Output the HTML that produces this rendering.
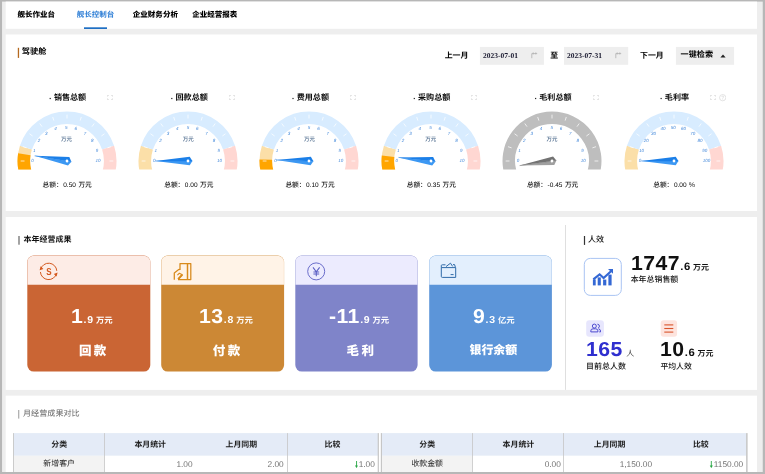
<!DOCTYPE html>
<html lang="zh"><head><meta charset="utf-8"><title>驾驶舱</title>
<style>
html,body{margin:0;padding:0;background:#b7b7b7}
body{width:765px;height:474px;overflow:hidden;position:relative;font-family:"Liberation Sans",sans-serif;will-change:transform;text-rendering:geometricPrecision}
.a{position:absolute;display:block}
span.a{white-space:nowrap}
.ls{font-family:"Liberation Sans",sans-serif}
.lf{font-family:"Liberation Serif",serif}
.cj{font-family:"Liberation Sans","Noto Sans CJK SC",sans-serif}
</style></head><body>
<svg class="a" style="left:0;top:0" width="765" height="474" viewBox="0 0 765 474"><rect x="0.00" y="0.00" width="765.00" height="474.00" fill="#b7b7b7"/><rect x="2.05" y="1.60" width="760.70" height="470.40" fill="#eeeeee"/><rect x="5.70" y="1.60" width="751.35" height="27.20" fill="#fff"/><rect x="5.70" y="34.50" width="751.35" height="176.50" fill="#fff"/><rect x="5.70" y="217.05" width="751.35" height="172.85" fill="#fff"/><rect x="5.70" y="395.65" width="751.35" height="76.35" fill="#fff"/><rect x="84.00" y="27.30" width="23.00" height="1.70" fill="#1f6fc4"/><rect x="17.80" y="47.80" width="1.30" height="10.10" fill="#b5691f"/><rect x="479.90" y="46.90" width="64.00" height="17.90" fill="#eeeeee"/><rect x="564.00" y="46.90" width="64.20" height="17.90" fill="#eeeeee"/><rect x="675.90" y="46.90" width="58.20" height="17.90" fill="#eeeeee"/><rect x="49.61" y="97.90" width="1.20" height="1.20" fill="#222"/><rect x="171.21" y="97.90" width="1.20" height="1.20" fill="#222"/><rect x="292.41" y="97.90" width="1.20" height="1.20" fill="#222"/><rect x="413.71" y="97.90" width="1.20" height="1.20" fill="#222"/><rect x="535.01" y="97.90" width="1.20" height="1.20" fill="#222"/><rect x="660.54" y="97.90" width="1.21" height="1.20" fill="#222"/><rect x="18.10" y="236.00" width="1.80" height="8.70" fill="#9a9a9a"/><rect x="27.3" y="255.5" width="123.00" height="116.10" rx="6.5" fill="#ca6534"/><path d="M27.45 284.7V262.00a6.35 6.35 0 0 1 6.35 -6.35H143.80a6.35 6.35 0 0 1 6.35 6.35V284.7z" fill="#fdece6"/><rect x="161.2" y="255.5" width="122.90" height="116.10" rx="6.5" fill="#cc8835"/><path d="M161.35 284.7V262.00a6.35 6.35 0 0 1 6.35 -6.35H277.60a6.35 6.35 0 0 1 6.35 6.35V284.7z" fill="#fff3e7"/><rect x="295.3" y="255.5" width="122.30" height="116.10" rx="6.5" fill="#7f84c9"/><path d="M295.45 284.7V262.00a6.35 6.35 0 0 1 6.35 -6.35H411.10a6.35 6.35 0 0 1 6.35 6.35V284.7z" fill="#ecebfe"/><rect x="429.2" y="255.5" width="122.70" height="116.10" rx="6.5" fill="#5c95d9"/><path d="M429.35 284.7V262.00a6.35 6.35 0 0 1 6.35 -6.35H545.40a6.35 6.35 0 0 1 6.35 6.35V284.7z" fill="#e3effd"/><rect x="565.10" y="225.00" width="0.70" height="164.90" fill="#d2d2d2"/><rect x="583.90" y="236.00" width="1.20" height="8.90" fill="#333"/><rect x="584.3" y="258.4" width="37" height="37" rx="6" fill="#fff" stroke="#a9c4f3" stroke-width="1"/><rect x="586.20" y="320.20" width="17.70" height="16.60" rx="3.0" fill="#e7e6fd"/><rect x="660.70" y="320.20" width="16.40" height="16.60" rx="3.0" fill="#fde4de"/><rect x="664.30" y="324.35" width="9.00" height="1.10" fill="#d9542b"/><rect x="664.30" y="327.95" width="9.00" height="1.10" fill="#d9542b"/><rect x="664.30" y="331.55" width="9.00" height="1.10" fill="#d9542b"/><rect x="18.10" y="410.00" width="1.20" height="8.60" fill="#aaa"/><rect x="13.60" y="433.10" width="364.40" height="22.70" fill="#e4ebf7"/><rect x="13.60" y="455.80" width="91.10" height="16.20" fill="#f3f3f3"/><rect x="104.70" y="455.80" width="273.30" height="16.20" fill="#fff"/><rect x="13.00" y="433.10" width="0.90" height="38.90" fill="#c6c6c6"/><rect x="104.00" y="433.10" width="0.80" height="38.90" fill="#c6c6c6"/><rect x="287.10" y="433.10" width="0.80" height="38.90" fill="#c6c6c6"/><rect x="377.70" y="433.10" width="1.20" height="38.90" fill="#c6c6c6"/><rect x="381.60" y="433.10" width="364.80" height="22.70" fill="#e4ebf7"/><rect x="381.60" y="455.80" width="91.20" height="16.20" fill="#f3f3f3"/><rect x="472.80" y="455.80" width="273.60" height="16.20" fill="#fff"/><rect x="380.80" y="433.10" width="1.20" height="38.90" fill="#c6c6c6"/><rect x="472.00" y="433.10" width="0.80" height="38.90" fill="#c6c6c6"/><rect x="563.10" y="433.10" width="0.80" height="38.90" fill="#c6c6c6"/><rect x="746.10" y="433.10" width="1.50" height="38.90" fill="#c6c6c6"/><rect x="0.00" y="472.00" width="765.00" height="2.00" fill="#b7b7b7"/></svg>
<span class="a cj" style="left:17.50px;top:10.85px;font-size:7.5px;line-height:7.5px;color:#000;font-weight:900">舰长作业台</span>
<span class="a cj" style="left:76.70px;top:10.85px;font-size:7.5px;line-height:7.5px;color:#2f7fd6;font-weight:bold">舰长控制台</span>
<span class="a cj" style="left:132.70px;top:10.82px;font-size:7.55px;line-height:7.55px;color:#000;font-weight:900">企业财务分析</span>
<span class="a cj" style="left:192.20px;top:10.85px;font-size:7.5px;line-height:7.5px;color:#000;font-weight:900">企业经营报表</span>
<span class="a cj" style="left:21.80px;top:47.70px;font-size:8.2px;line-height:8.2px;color:#000;font-weight:bold">驾驶舱</span>
<span class="a cj" style="left:444.70px;top:51.55px;font-size:7.9px;line-height:7.9px;color:#000;font-weight:bold">上一月</span>
<span class="a lf" style="left:482.90px;top:51.92px;font-size:7.5px;line-height:7.5px;color:#1a1a30;font-weight:bold;">2023-07-01</span>
<span class="a lf" style="left:567.00px;top:51.92px;font-size:7.5px;line-height:7.5px;color:#1a1a30;font-weight:bold;">2023-07-31</span>
<span class="a cj" style="left:550.35px;top:51.55px;font-size:7.9px;line-height:7.9px;color:#000;font-weight:bold">至</span>
<span class="a cj" style="left:640.00px;top:51.55px;font-size:7.9px;line-height:7.9px;color:#000;font-weight:bold">下一月</span>
<span class="a cj" style="left:680.60px;top:51.45px;font-size:8.1px;line-height:8.1px;color:#000;font-weight:bold">一键检索</span>
<svg class="a" style="left:720px;top:53.5px" width="6" height="4" viewBox="0 0 6 4"><path d="M0.4 3.6L3 0.6L5.6 3.6z" fill="#222"/></svg>
<svg class="a" style="left:530.5px;top:51.5px" width="7" height="7" viewBox="0 0 7 7" fill="none" stroke="#b0b0b0" stroke-width="0.8"><path d="M0.8 6.2V1.6H6.2M2.2 0.4V2.4M4.8 0.4V2.4"/></svg>
<svg class="a" style="left:614.5px;top:51.5px" width="7" height="7" viewBox="0 0 7 7" fill="none" stroke="#b0b0b0" stroke-width="0.8"><path d="M0.8 6.2V1.6H6.2M2.2 0.4V2.4M4.8 0.4V2.4"/></svg>
<svg class="a" style="left:6.60px;top:106.15px" width="120" height="70" viewBox="6.60 106.15 120 70"><clipPath id="gc66"><rect x="6.60" y="106.15" width="120" height="63.55"/></clipPath><g clip-path="url(#gc66)"><path d="M25.07 173.06A43.2 43.2 0 0 1 25.51 147.80" stroke="#fbdfa8" stroke-width="12.600000000000001" fill="none"/><path d="M25.51 147.80A43.2 43.2 0 0 1 107.69 147.80" stroke="#d8ecff" stroke-width="12.600000000000001" fill="none"/><path d="M107.69 147.80A43.2 43.2 0 0 1 108.13 173.06" stroke="#ffd7d2" stroke-width="12.600000000000001" fill="none"/><path d="M25.07 173.06A43.2 43.2 0 0 1 23.93 154.39" stroke="#ffa500" stroke-width="12.600000000000001" fill="none"/></g><path d="M24.10 161.15L20.30 161.15" stroke="#fff" stroke-width="0.8" opacity="0.9"/><path d="M26.18 148.02L22.57 146.84" stroke="#fff" stroke-width="0.8" opacity="0.9"/><path d="M32.22 136.17L29.14 133.94" stroke="#fff" stroke-width="0.8" opacity="0.9"/><path d="M41.62 126.77L39.39 123.69" stroke="#fff" stroke-width="0.8" opacity="0.9"/><path d="M53.47 120.73L52.29 117.12" stroke="#fff" stroke-width="0.8" opacity="0.9"/><path d="M66.60 118.65L66.60 114.85" stroke="#fff" stroke-width="0.8" opacity="0.9"/><path d="M79.73 120.73L80.91 117.12" stroke="#fff" stroke-width="0.8" opacity="0.9"/><path d="M91.58 126.77L93.81 123.69" stroke="#fff" stroke-width="0.8" opacity="0.9"/><path d="M100.98 136.17L104.06 133.94" stroke="#fff" stroke-width="0.8" opacity="0.9"/><path d="M107.02 148.02L110.63 146.84" stroke="#fff" stroke-width="0.8" opacity="0.9"/><path d="M109.10 161.15L112.90 161.15" stroke="#fff" stroke-width="0.8" opacity="0.9"/><g transform="translate(66.60 161.15) rotate(-171.00)"><path d="M32.8 0L-1.7 4.3L-4.4 0z" fill="#1b7fe8"/><path d="M32.8 0L-1.7 -4.3L-4.4 0z" fill="#3c98f3"/><path d="M32.8 0L-4.4 0" stroke="#1b7fe8" stroke-width="0.5"/><circle r="1.4" fill="#fff"/></g></svg>
<span class="a ls" style="left:32.60px;top:158.96px;font-size:4.5px;line-height:4.5px;color:#4388da;font-weight:normal;transform:translateX(-50%);font-style:italic;">0</span>
<span class="a ls" style="left:34.23px;top:148.67px;font-size:4.5px;line-height:4.5px;color:#4388da;font-weight:normal;transform:translateX(-50%);font-style:italic;">1</span>
<span class="a ls" style="left:38.96px;top:139.39px;font-size:4.5px;line-height:4.5px;color:#4388da;font-weight:normal;transform:translateX(-50%);font-style:italic;">2</span>
<span class="a ls" style="left:46.33px;top:132.02px;font-size:4.5px;line-height:4.5px;color:#4388da;font-weight:normal;transform:translateX(-50%);font-style:italic;">3</span>
<span class="a ls" style="left:55.61px;top:127.29px;font-size:4.5px;line-height:4.5px;color:#4388da;font-weight:normal;transform:translateX(-50%);font-style:italic;">4</span>
<span class="a ls" style="left:66.30px;top:125.66px;font-size:4.5px;line-height:4.5px;color:#4388da;font-weight:normal;transform:translateX(-50%);font-style:italic;">5</span>
<span class="a ls" style="left:75.69px;top:127.29px;font-size:4.5px;line-height:4.5px;color:#4388da;font-weight:normal;transform:translateX(-50%);font-style:italic;">6</span>
<span class="a ls" style="left:84.97px;top:132.02px;font-size:4.5px;line-height:4.5px;color:#4388da;font-weight:normal;transform:translateX(-50%);font-style:italic;">7</span>
<span class="a ls" style="left:92.34px;top:139.39px;font-size:4.5px;line-height:4.5px;color:#4388da;font-weight:normal;transform:translateX(-50%);font-style:italic;">8</span>
<span class="a ls" style="left:97.07px;top:148.67px;font-size:4.5px;line-height:4.5px;color:#4388da;font-weight:normal;transform:translateX(-50%);font-style:italic;">9</span>
<span class="a ls" style="left:97.90px;top:158.96px;font-size:4.5px;line-height:4.5px;color:#4388da;font-weight:normal;transform:translateX(-50%);font-style:italic;">10</span>
<span class="a cj" style="left:61.10px;top:138.15px;font-size:5.5px;line-height:5.5px;color:#4d6a8c;font-weight:500">万元</span>
<span class="a cj" style="left:53.91px;top:94.27px;font-size:8.07px;line-height:8.07px;color:#0a0a0a;font-weight:bold">销售总额</span>
<div class="a ls" style="left:67.20px;top:181.20px;height:10px;line-height:10px;font-size:6.5px;color:#1c1c1c;white-space:nowrap;transform:translateX(-50%)"><span class="cj" style="font-size:6.7px;color:#111;font-weight:500">总额：</span><span style="margin-left:0.6px;color:#000">0.50</span><span class="cj" style="font-size:6.7px;color:#111;font-weight:500;margin-left:2.5px">万元</span></div>
<svg class="a" style="left:107.10px;top:95.20px" width="6" height="5" viewBox="0 0 6 5" fill="none" stroke="#d6d6d6" stroke-width="0.8"><path d="M0.4 1.6V0.4H1.8M4.2 0.4H5.6V1.6M5.6 3.4V4.6H4.2M1.8 4.6H0.4V3.4"/></svg>
<svg class="a" style="left:128.20px;top:106.15px" width="120" height="70" viewBox="128.20 106.15 120 70"><clipPath id="gc188"><rect x="128.20" y="106.15" width="120" height="63.55"/></clipPath><g clip-path="url(#gc188)"><path d="M146.67 173.06A43.2 43.2 0 0 1 147.11 147.80" stroke="#fbdfa8" stroke-width="12.600000000000001" fill="none"/><path d="M147.11 147.80A43.2 43.2 0 0 1 229.29 147.80" stroke="#d8ecff" stroke-width="12.600000000000001" fill="none"/><path d="M229.29 147.80A43.2 43.2 0 0 1 229.73 173.06" stroke="#ffd7d2" stroke-width="12.600000000000001" fill="none"/></g><path d="M145.70 161.15L141.90 161.15" stroke="#fff" stroke-width="0.8" opacity="0.9"/><path d="M147.78 148.02L144.17 146.84" stroke="#fff" stroke-width="0.8" opacity="0.9"/><path d="M153.82 136.17L150.74 133.94" stroke="#fff" stroke-width="0.8" opacity="0.9"/><path d="M163.22 126.77L160.99 123.69" stroke="#fff" stroke-width="0.8" opacity="0.9"/><path d="M175.07 120.73L173.89 117.12" stroke="#fff" stroke-width="0.8" opacity="0.9"/><path d="M188.20 118.65L188.20 114.85" stroke="#fff" stroke-width="0.8" opacity="0.9"/><path d="M201.33 120.73L202.51 117.12" stroke="#fff" stroke-width="0.8" opacity="0.9"/><path d="M213.18 126.77L215.41 123.69" stroke="#fff" stroke-width="0.8" opacity="0.9"/><path d="M222.58 136.17L225.66 133.94" stroke="#fff" stroke-width="0.8" opacity="0.9"/><path d="M228.62 148.02L232.23 146.84" stroke="#fff" stroke-width="0.8" opacity="0.9"/><path d="M230.70 161.15L234.50 161.15" stroke="#fff" stroke-width="0.8" opacity="0.9"/><g transform="translate(188.20 161.15) rotate(-180.00)"><path d="M32.8 0L-1.7 4.3L-4.4 0z" fill="#1b7fe8"/><path d="M32.8 0L-1.7 -4.3L-4.4 0z" fill="#3c98f3"/><path d="M32.8 0L-4.4 0" stroke="#1b7fe8" stroke-width="0.5"/><circle r="1.4" fill="#fff"/></g></svg>
<span class="a ls" style="left:154.20px;top:158.96px;font-size:4.5px;line-height:4.5px;color:#4388da;font-weight:normal;transform:translateX(-50%);font-style:italic;">0</span>
<span class="a ls" style="left:155.83px;top:148.67px;font-size:4.5px;line-height:4.5px;color:#4388da;font-weight:normal;transform:translateX(-50%);font-style:italic;">1</span>
<span class="a ls" style="left:160.56px;top:139.39px;font-size:4.5px;line-height:4.5px;color:#4388da;font-weight:normal;transform:translateX(-50%);font-style:italic;">2</span>
<span class="a ls" style="left:167.93px;top:132.02px;font-size:4.5px;line-height:4.5px;color:#4388da;font-weight:normal;transform:translateX(-50%);font-style:italic;">3</span>
<span class="a ls" style="left:177.21px;top:127.29px;font-size:4.5px;line-height:4.5px;color:#4388da;font-weight:normal;transform:translateX(-50%);font-style:italic;">4</span>
<span class="a ls" style="left:187.90px;top:125.66px;font-size:4.5px;line-height:4.5px;color:#4388da;font-weight:normal;transform:translateX(-50%);font-style:italic;">5</span>
<span class="a ls" style="left:197.29px;top:127.29px;font-size:4.5px;line-height:4.5px;color:#4388da;font-weight:normal;transform:translateX(-50%);font-style:italic;">6</span>
<span class="a ls" style="left:206.57px;top:132.02px;font-size:4.5px;line-height:4.5px;color:#4388da;font-weight:normal;transform:translateX(-50%);font-style:italic;">7</span>
<span class="a ls" style="left:213.94px;top:139.39px;font-size:4.5px;line-height:4.5px;color:#4388da;font-weight:normal;transform:translateX(-50%);font-style:italic;">8</span>
<span class="a ls" style="left:218.67px;top:148.67px;font-size:4.5px;line-height:4.5px;color:#4388da;font-weight:normal;transform:translateX(-50%);font-style:italic;">9</span>
<span class="a ls" style="left:219.50px;top:158.96px;font-size:4.5px;line-height:4.5px;color:#4388da;font-weight:normal;transform:translateX(-50%);font-style:italic;">10</span>
<span class="a cj" style="left:182.70px;top:138.15px;font-size:5.5px;line-height:5.5px;color:#4d6a8c;font-weight:500">万元</span>
<span class="a cj" style="left:175.51px;top:94.27px;font-size:8.07px;line-height:8.07px;color:#0a0a0a;font-weight:bold">回款总额</span>
<div class="a ls" style="left:188.80px;top:181.20px;height:10px;line-height:10px;font-size:6.5px;color:#1c1c1c;white-space:nowrap;transform:translateX(-50%)"><span class="cj" style="font-size:6.7px;color:#111;font-weight:500">总额：</span><span style="margin-left:0.6px;color:#000">0.00</span><span class="cj" style="font-size:6.7px;color:#111;font-weight:500;margin-left:2.5px">万元</span></div>
<svg class="a" style="left:228.70px;top:95.20px" width="6" height="5" viewBox="0 0 6 5" fill="none" stroke="#d6d6d6" stroke-width="0.8"><path d="M0.4 1.6V0.4H1.8M4.2 0.4H5.6V1.6M5.6 3.4V4.6H4.2M1.8 4.6H0.4V3.4"/></svg>
<svg class="a" style="left:249.40px;top:106.15px" width="120" height="70" viewBox="249.40 106.15 120 70"><clipPath id="gc309"><rect x="249.40" y="106.15" width="120" height="63.55"/></clipPath><g clip-path="url(#gc309)"><path d="M267.87 173.06A43.2 43.2 0 0 1 268.31 147.80" stroke="#fbdfa8" stroke-width="12.600000000000001" fill="none"/><path d="M268.31 147.80A43.2 43.2 0 0 1 350.49 147.80" stroke="#d8ecff" stroke-width="12.600000000000001" fill="none"/><path d="M350.49 147.80A43.2 43.2 0 0 1 350.93 173.06" stroke="#ffd7d2" stroke-width="12.600000000000001" fill="none"/><path d="M267.87 173.06A43.2 43.2 0 0 1 266.22 159.79" stroke="#ffa500" stroke-width="12.600000000000001" fill="none"/></g><path d="M266.90 161.15L263.10 161.15" stroke="#fff" stroke-width="0.8" opacity="0.9"/><path d="M268.98 148.02L265.37 146.84" stroke="#fff" stroke-width="0.8" opacity="0.9"/><path d="M275.02 136.17L271.94 133.94" stroke="#fff" stroke-width="0.8" opacity="0.9"/><path d="M284.42 126.77L282.19 123.69" stroke="#fff" stroke-width="0.8" opacity="0.9"/><path d="M296.27 120.73L295.09 117.12" stroke="#fff" stroke-width="0.8" opacity="0.9"/><path d="M309.40 118.65L309.40 114.85" stroke="#fff" stroke-width="0.8" opacity="0.9"/><path d="M322.53 120.73L323.71 117.12" stroke="#fff" stroke-width="0.8" opacity="0.9"/><path d="M334.38 126.77L336.61 123.69" stroke="#fff" stroke-width="0.8" opacity="0.9"/><path d="M343.78 136.17L346.86 133.94" stroke="#fff" stroke-width="0.8" opacity="0.9"/><path d="M349.82 148.02L353.43 146.84" stroke="#fff" stroke-width="0.8" opacity="0.9"/><path d="M351.90 161.15L355.70 161.15" stroke="#fff" stroke-width="0.8" opacity="0.9"/><g transform="translate(309.40 161.15) rotate(-178.20)"><path d="M32.8 0L-1.7 4.3L-4.4 0z" fill="#1b7fe8"/><path d="M32.8 0L-1.7 -4.3L-4.4 0z" fill="#3c98f3"/><path d="M32.8 0L-4.4 0" stroke="#1b7fe8" stroke-width="0.5"/><circle r="1.4" fill="#fff"/></g></svg>
<span class="a ls" style="left:275.40px;top:158.96px;font-size:4.5px;line-height:4.5px;color:#4388da;font-weight:normal;transform:translateX(-50%);font-style:italic;">0</span>
<span class="a ls" style="left:277.03px;top:148.67px;font-size:4.5px;line-height:4.5px;color:#4388da;font-weight:normal;transform:translateX(-50%);font-style:italic;">1</span>
<span class="a ls" style="left:281.76px;top:139.39px;font-size:4.5px;line-height:4.5px;color:#4388da;font-weight:normal;transform:translateX(-50%);font-style:italic;">2</span>
<span class="a ls" style="left:289.13px;top:132.02px;font-size:4.5px;line-height:4.5px;color:#4388da;font-weight:normal;transform:translateX(-50%);font-style:italic;">3</span>
<span class="a ls" style="left:298.41px;top:127.29px;font-size:4.5px;line-height:4.5px;color:#4388da;font-weight:normal;transform:translateX(-50%);font-style:italic;">4</span>
<span class="a ls" style="left:309.10px;top:125.66px;font-size:4.5px;line-height:4.5px;color:#4388da;font-weight:normal;transform:translateX(-50%);font-style:italic;">5</span>
<span class="a ls" style="left:318.49px;top:127.29px;font-size:4.5px;line-height:4.5px;color:#4388da;font-weight:normal;transform:translateX(-50%);font-style:italic;">6</span>
<span class="a ls" style="left:327.77px;top:132.02px;font-size:4.5px;line-height:4.5px;color:#4388da;font-weight:normal;transform:translateX(-50%);font-style:italic;">7</span>
<span class="a ls" style="left:335.14px;top:139.39px;font-size:4.5px;line-height:4.5px;color:#4388da;font-weight:normal;transform:translateX(-50%);font-style:italic;">8</span>
<span class="a ls" style="left:339.87px;top:148.67px;font-size:4.5px;line-height:4.5px;color:#4388da;font-weight:normal;transform:translateX(-50%);font-style:italic;">9</span>
<span class="a ls" style="left:340.70px;top:158.96px;font-size:4.5px;line-height:4.5px;color:#4388da;font-weight:normal;transform:translateX(-50%);font-style:italic;">10</span>
<span class="a cj" style="left:303.90px;top:138.15px;font-size:5.5px;line-height:5.5px;color:#4d6a8c;font-weight:500">万元</span>
<span class="a cj" style="left:296.71px;top:94.27px;font-size:8.07px;line-height:8.07px;color:#0a0a0a;font-weight:bold">费用总额</span>
<div class="a ls" style="left:310.00px;top:181.20px;height:10px;line-height:10px;font-size:6.5px;color:#1c1c1c;white-space:nowrap;transform:translateX(-50%)"><span class="cj" style="font-size:6.7px;color:#111;font-weight:500">总额：</span><span style="margin-left:0.6px;color:#000">0.10</span><span class="cj" style="font-size:6.7px;color:#111;font-weight:500;margin-left:2.5px">万元</span></div>
<svg class="a" style="left:349.90px;top:95.20px" width="6" height="5" viewBox="0 0 6 5" fill="none" stroke="#d6d6d6" stroke-width="0.8"><path d="M0.4 1.6V0.4H1.8M4.2 0.4H5.6V1.6M5.6 3.4V4.6H4.2M1.8 4.6H0.4V3.4"/></svg>
<svg class="a" style="left:370.70px;top:106.15px" width="120" height="70" viewBox="370.70 106.15 120 70"><clipPath id="gc430"><rect x="370.70" y="106.15" width="120" height="63.55"/></clipPath><g clip-path="url(#gc430)"><path d="M389.17 173.06A43.2 43.2 0 0 1 389.61 147.80" stroke="#fbdfa8" stroke-width="12.600000000000001" fill="none"/><path d="M389.61 147.80A43.2 43.2 0 0 1 471.79 147.80" stroke="#d8ecff" stroke-width="12.600000000000001" fill="none"/><path d="M471.79 147.80A43.2 43.2 0 0 1 472.23 173.06" stroke="#ffd7d2" stroke-width="12.600000000000001" fill="none"/><path d="M389.17 173.06A43.2 43.2 0 0 1 387.76 156.41" stroke="#ffa500" stroke-width="12.600000000000001" fill="none"/></g><path d="M388.20 161.15L384.40 161.15" stroke="#fff" stroke-width="0.8" opacity="0.9"/><path d="M390.28 148.02L386.67 146.84" stroke="#fff" stroke-width="0.8" opacity="0.9"/><path d="M396.32 136.17L393.24 133.94" stroke="#fff" stroke-width="0.8" opacity="0.9"/><path d="M405.72 126.77L403.49 123.69" stroke="#fff" stroke-width="0.8" opacity="0.9"/><path d="M417.57 120.73L416.39 117.12" stroke="#fff" stroke-width="0.8" opacity="0.9"/><path d="M430.70 118.65L430.70 114.85" stroke="#fff" stroke-width="0.8" opacity="0.9"/><path d="M443.83 120.73L445.01 117.12" stroke="#fff" stroke-width="0.8" opacity="0.9"/><path d="M455.68 126.77L457.91 123.69" stroke="#fff" stroke-width="0.8" opacity="0.9"/><path d="M465.08 136.17L468.16 133.94" stroke="#fff" stroke-width="0.8" opacity="0.9"/><path d="M471.12 148.02L474.73 146.84" stroke="#fff" stroke-width="0.8" opacity="0.9"/><path d="M473.20 161.15L477.00 161.15" stroke="#fff" stroke-width="0.8" opacity="0.9"/><g transform="translate(430.70 161.15) rotate(-173.70)"><path d="M32.8 0L-1.7 4.3L-4.4 0z" fill="#1b7fe8"/><path d="M32.8 0L-1.7 -4.3L-4.4 0z" fill="#3c98f3"/><path d="M32.8 0L-4.4 0" stroke="#1b7fe8" stroke-width="0.5"/><circle r="1.4" fill="#fff"/></g></svg>
<span class="a ls" style="left:396.70px;top:158.96px;font-size:4.5px;line-height:4.5px;color:#4388da;font-weight:normal;transform:translateX(-50%);font-style:italic;">0</span>
<span class="a ls" style="left:398.33px;top:148.67px;font-size:4.5px;line-height:4.5px;color:#4388da;font-weight:normal;transform:translateX(-50%);font-style:italic;">1</span>
<span class="a ls" style="left:403.06px;top:139.39px;font-size:4.5px;line-height:4.5px;color:#4388da;font-weight:normal;transform:translateX(-50%);font-style:italic;">2</span>
<span class="a ls" style="left:410.43px;top:132.02px;font-size:4.5px;line-height:4.5px;color:#4388da;font-weight:normal;transform:translateX(-50%);font-style:italic;">3</span>
<span class="a ls" style="left:419.71px;top:127.29px;font-size:4.5px;line-height:4.5px;color:#4388da;font-weight:normal;transform:translateX(-50%);font-style:italic;">4</span>
<span class="a ls" style="left:430.40px;top:125.66px;font-size:4.5px;line-height:4.5px;color:#4388da;font-weight:normal;transform:translateX(-50%);font-style:italic;">5</span>
<span class="a ls" style="left:439.79px;top:127.29px;font-size:4.5px;line-height:4.5px;color:#4388da;font-weight:normal;transform:translateX(-50%);font-style:italic;">6</span>
<span class="a ls" style="left:449.07px;top:132.02px;font-size:4.5px;line-height:4.5px;color:#4388da;font-weight:normal;transform:translateX(-50%);font-style:italic;">7</span>
<span class="a ls" style="left:456.44px;top:139.39px;font-size:4.5px;line-height:4.5px;color:#4388da;font-weight:normal;transform:translateX(-50%);font-style:italic;">8</span>
<span class="a ls" style="left:461.17px;top:148.67px;font-size:4.5px;line-height:4.5px;color:#4388da;font-weight:normal;transform:translateX(-50%);font-style:italic;">9</span>
<span class="a ls" style="left:462.00px;top:158.96px;font-size:4.5px;line-height:4.5px;color:#4388da;font-weight:normal;transform:translateX(-50%);font-style:italic;">10</span>
<span class="a cj" style="left:425.20px;top:138.15px;font-size:5.5px;line-height:5.5px;color:#4d6a8c;font-weight:500">万元</span>
<span class="a cj" style="left:418.01px;top:94.27px;font-size:8.07px;line-height:8.07px;color:#0a0a0a;font-weight:bold">采购总额</span>
<div class="a ls" style="left:431.30px;top:181.20px;height:10px;line-height:10px;font-size:6.5px;color:#1c1c1c;white-space:nowrap;transform:translateX(-50%)"><span class="cj" style="font-size:6.7px;color:#111;font-weight:500">总额：</span><span style="margin-left:0.6px;color:#000">0.35</span><span class="cj" style="font-size:6.7px;color:#111;font-weight:500;margin-left:2.5px">万元</span></div>
<svg class="a" style="left:471.20px;top:95.20px" width="6" height="5" viewBox="0 0 6 5" fill="none" stroke="#d6d6d6" stroke-width="0.8"><path d="M0.4 1.6V0.4H1.8M4.2 0.4H5.6V1.6M5.6 3.4V4.6H4.2M1.8 4.6H0.4V3.4"/></svg>
<svg class="a" style="left:492.00px;top:106.15px" width="120" height="70" viewBox="492.00 106.15 120 70"><clipPath id="gc552"><rect x="492.00" y="106.15" width="120" height="63.55"/></clipPath><g clip-path="url(#gc552)"><path d="M510.47 173.06A43.2 43.2 0 1 1 593.53 173.06" stroke="#bebebe" stroke-width="12.600000000000001" fill="none"/></g><path d="M509.50 161.15L505.70 161.15" stroke="#fff" stroke-width="0.8" opacity="0.9"/><path d="M511.58 148.02L507.97 146.84" stroke="#fff" stroke-width="0.8" opacity="0.9"/><path d="M517.62 136.17L514.54 133.94" stroke="#fff" stroke-width="0.8" opacity="0.9"/><path d="M527.02 126.77L524.79 123.69" stroke="#fff" stroke-width="0.8" opacity="0.9"/><path d="M538.87 120.73L537.69 117.12" stroke="#fff" stroke-width="0.8" opacity="0.9"/><path d="M552.00 118.65L552.00 114.85" stroke="#fff" stroke-width="0.8" opacity="0.9"/><path d="M565.13 120.73L566.31 117.12" stroke="#fff" stroke-width="0.8" opacity="0.9"/><path d="M576.98 126.77L579.21 123.69" stroke="#fff" stroke-width="0.8" opacity="0.9"/><path d="M586.38 136.17L589.46 133.94" stroke="#fff" stroke-width="0.8" opacity="0.9"/><path d="M592.42 148.02L596.03 146.84" stroke="#fff" stroke-width="0.8" opacity="0.9"/><path d="M594.50 161.15L598.30 161.15" stroke="#fff" stroke-width="0.8" opacity="0.9"/><g transform="translate(552.00 161.15) rotate(-188.10)"><path d="M32.8 0L-1.7 4.3L-4.4 0z" fill="#727272"/><path d="M32.8 0L-1.7 -4.3L-4.4 0z" fill="#a0a0a0"/><path d="M32.8 0L-4.4 0" stroke="#727272" stroke-width="0.5"/><circle r="1.4" fill="#fff"/></g></svg>
<span class="a ls" style="left:518.00px;top:158.96px;font-size:4.5px;line-height:4.5px;color:#4388da;font-weight:normal;transform:translateX(-50%);font-style:italic;">0</span>
<span class="a ls" style="left:519.63px;top:148.67px;font-size:4.5px;line-height:4.5px;color:#4388da;font-weight:normal;transform:translateX(-50%);font-style:italic;">1</span>
<span class="a ls" style="left:524.36px;top:139.39px;font-size:4.5px;line-height:4.5px;color:#4388da;font-weight:normal;transform:translateX(-50%);font-style:italic;">2</span>
<span class="a ls" style="left:531.73px;top:132.02px;font-size:4.5px;line-height:4.5px;color:#4388da;font-weight:normal;transform:translateX(-50%);font-style:italic;">3</span>
<span class="a ls" style="left:541.01px;top:127.29px;font-size:4.5px;line-height:4.5px;color:#4388da;font-weight:normal;transform:translateX(-50%);font-style:italic;">4</span>
<span class="a ls" style="left:551.70px;top:125.66px;font-size:4.5px;line-height:4.5px;color:#4388da;font-weight:normal;transform:translateX(-50%);font-style:italic;">5</span>
<span class="a ls" style="left:561.09px;top:127.29px;font-size:4.5px;line-height:4.5px;color:#4388da;font-weight:normal;transform:translateX(-50%);font-style:italic;">6</span>
<span class="a ls" style="left:570.37px;top:132.02px;font-size:4.5px;line-height:4.5px;color:#4388da;font-weight:normal;transform:translateX(-50%);font-style:italic;">7</span>
<span class="a ls" style="left:577.74px;top:139.39px;font-size:4.5px;line-height:4.5px;color:#4388da;font-weight:normal;transform:translateX(-50%);font-style:italic;">8</span>
<span class="a ls" style="left:582.47px;top:148.67px;font-size:4.5px;line-height:4.5px;color:#4388da;font-weight:normal;transform:translateX(-50%);font-style:italic;">9</span>
<span class="a ls" style="left:583.30px;top:158.96px;font-size:4.5px;line-height:4.5px;color:#4388da;font-weight:normal;transform:translateX(-50%);font-style:italic;">10</span>
<span class="a cj" style="left:546.50px;top:138.15px;font-size:5.5px;line-height:5.5px;color:#4d6a8c;font-weight:500">万元</span>
<span class="a cj" style="left:539.31px;top:94.27px;font-size:8.07px;line-height:8.07px;color:#0a0a0a;font-weight:bold">毛利总额</span>
<div class="a ls" style="left:552.60px;top:181.20px;height:10px;line-height:10px;font-size:6.5px;color:#1c1c1c;white-space:nowrap;transform:translateX(-50%)"><span class="cj" style="font-size:6.7px;color:#111;font-weight:500">总额：</span><span style="margin-left:0.6px;color:#000">-0.45</span><span class="cj" style="font-size:6.7px;color:#111;font-weight:500;margin-left:2.5px">万元</span></div>
<svg class="a" style="left:592.50px;top:95.20px" width="6" height="5" viewBox="0 0 6 5" fill="none" stroke="#d6d6d6" stroke-width="0.8"><path d="M0.4 1.6V0.4H1.8M4.2 0.4H5.6V1.6M5.6 3.4V4.6H4.2M1.8 4.6H0.4V3.4"/></svg>
<svg class="a" style="left:613.50px;top:106.15px" width="120" height="70" viewBox="613.50 106.15 120 70"><clipPath id="gc673"><rect x="613.50" y="106.15" width="120" height="63.55"/></clipPath><g clip-path="url(#gc673)"><path d="M631.97 173.06A43.2 43.2 0 0 1 632.41 147.80" stroke="#fbdfa8" stroke-width="12.600000000000001" fill="none"/><path d="M632.41 147.80A43.2 43.2 0 0 1 714.59 147.80" stroke="#d8ecff" stroke-width="12.600000000000001" fill="none"/><path d="M714.59 147.80A43.2 43.2 0 0 1 715.03 173.06" stroke="#ffd7d2" stroke-width="12.600000000000001" fill="none"/></g><path d="M631.00 161.15L627.20 161.15" stroke="#fff" stroke-width="0.8" opacity="0.9"/><path d="M633.08 148.02L629.47 146.84" stroke="#fff" stroke-width="0.8" opacity="0.9"/><path d="M639.12 136.17L636.04 133.94" stroke="#fff" stroke-width="0.8" opacity="0.9"/><path d="M648.52 126.77L646.29 123.69" stroke="#fff" stroke-width="0.8" opacity="0.9"/><path d="M660.37 120.73L659.19 117.12" stroke="#fff" stroke-width="0.8" opacity="0.9"/><path d="M673.50 118.65L673.50 114.85" stroke="#fff" stroke-width="0.8" opacity="0.9"/><path d="M686.63 120.73L687.81 117.12" stroke="#fff" stroke-width="0.8" opacity="0.9"/><path d="M698.48 126.77L700.71 123.69" stroke="#fff" stroke-width="0.8" opacity="0.9"/><path d="M707.88 136.17L710.96 133.94" stroke="#fff" stroke-width="0.8" opacity="0.9"/><path d="M713.92 148.02L717.53 146.84" stroke="#fff" stroke-width="0.8" opacity="0.9"/><path d="M716.00 161.15L719.80 161.15" stroke="#fff" stroke-width="0.8" opacity="0.9"/><g transform="translate(673.50 161.15) rotate(-180.00)"><path d="M32.8 0L-1.7 4.3L-4.4 0z" fill="#1b7fe8"/><path d="M32.8 0L-1.7 -4.3L-4.4 0z" fill="#3c98f3"/><path d="M32.8 0L-4.4 0" stroke="#1b7fe8" stroke-width="0.5"/><circle r="1.4" fill="#fff"/></g></svg>
<span class="a ls" style="left:639.90px;top:158.96px;font-size:4.5px;line-height:4.5px;color:#4388da;font-weight:normal;transform:translateX(-50%);font-style:italic;">0</span>
<span class="a ls" style="left:641.53px;top:148.67px;font-size:4.5px;line-height:4.5px;color:#4388da;font-weight:normal;transform:translateX(-50%);font-style:italic;">10</span>
<span class="a ls" style="left:646.26px;top:139.39px;font-size:4.5px;line-height:4.5px;color:#4388da;font-weight:normal;transform:translateX(-50%);font-style:italic;">20</span>
<span class="a ls" style="left:653.63px;top:132.02px;font-size:4.5px;line-height:4.5px;color:#4388da;font-weight:normal;transform:translateX(-50%);font-style:italic;">30</span>
<span class="a ls" style="left:662.91px;top:127.29px;font-size:4.5px;line-height:4.5px;color:#4388da;font-weight:normal;transform:translateX(-50%);font-style:italic;">40</span>
<span class="a ls" style="left:673.20px;top:125.66px;font-size:4.5px;line-height:4.5px;color:#4388da;font-weight:normal;transform:translateX(-50%);font-style:italic;">50</span>
<span class="a ls" style="left:683.49px;top:127.29px;font-size:4.5px;line-height:4.5px;color:#4388da;font-weight:normal;transform:translateX(-50%);font-style:italic;">60</span>
<span class="a ls" style="left:692.77px;top:132.02px;font-size:4.5px;line-height:4.5px;color:#4388da;font-weight:normal;transform:translateX(-50%);font-style:italic;">70</span>
<span class="a ls" style="left:700.14px;top:139.39px;font-size:4.5px;line-height:4.5px;color:#4388da;font-weight:normal;transform:translateX(-50%);font-style:italic;">80</span>
<span class="a ls" style="left:704.87px;top:148.67px;font-size:4.5px;line-height:4.5px;color:#4388da;font-weight:normal;transform:translateX(-50%);font-style:italic;">90</span>
<span class="a ls" style="left:706.50px;top:158.96px;font-size:4.5px;line-height:4.5px;color:#4388da;font-weight:normal;transform:translateX(-50%);font-style:italic;">100</span>
<span class="a cj" style="left:664.84px;top:94.27px;font-size:8.07px;line-height:8.07px;color:#0a0a0a;font-weight:bold">毛利率</span>
<div class="a ls" style="left:674.10px;top:181.20px;height:10px;line-height:10px;font-size:6.5px;color:#1c1c1c;white-space:nowrap;transform:translateX(-50%)"><span class="cj" style="font-size:6.7px;color:#111;font-weight:500">总额：</span><span style="margin-left:0.6px;color:#000">0.00</span><span style="font-size:7px;margin-left:2.2px">%</span></div>
<svg class="a" style="left:710.00px;top:95.20px" width="6" height="5" viewBox="0 0 6 5" fill="none" stroke="#d6d6d6" stroke-width="0.8"><path d="M0.4 1.6V0.4H1.8M4.2 0.4H5.6V1.6M5.6 3.4V4.6H4.2M1.8 4.6H0.4V3.4"/></svg>
<svg class="a" style="left:718.9px;top:94.2px" width="7.4" height="7.4" viewBox="0 0 8 8" fill="none" stroke="#d9d9d9" stroke-width="0.8"><circle cx="4" cy="4" r="3.4"/><path d="M3 3.2Q3 2.2 4 2.2Q5 2.2 5 3.1Q5 3.8 4 4.3V4.9M4 5.7V6.2" stroke-width="0.8"/></svg>
<span class="a cj" style="left:23.50px;top:236.20px;font-size:8px;line-height:8px;color:#111;font-weight:bold">本年经营成果</span>
<div class="a ls" style="left:71.30px;top:304.9px;height:24px;line-height:24px;white-space:nowrap;color:#fff;font-weight:bold;transform-origin:0 0;transform:scaleX(1.05)"><span style="font-size:20.2px;letter-spacing:0.45px">1</span><span style="font-size:10px;letter-spacing:0.6px;margin-left:0.3px">.9</span><span style="display:inline-block;width:2.2px"></span><span class="cj" style="font-size:7.95px;color:#fff;font-weight:bold">万元</span></div>
<span class="a cj" style="left:78.90px;top:345.05px;font-size:12.5px;line-height:12.5px;letter-spacing:2.4px;color:#fff;font-weight:900">回款</span>
<div class="a ls" style="left:199.20px;top:304.9px;height:24px;line-height:24px;white-space:nowrap;color:#fff;font-weight:bold;transform-origin:0 0;transform:scaleX(1.05)"><span style="font-size:20.2px;letter-spacing:0.45px">13</span><span style="font-size:10px;letter-spacing:0.6px;margin-left:0.3px">.8</span><span style="display:inline-block;width:2.2px"></span><span class="cj" style="font-size:7.95px;color:#fff;font-weight:bold">万元</span></div>
<span class="a cj" style="left:212.75px;top:345.05px;font-size:12.5px;line-height:12.5px;letter-spacing:2.4px;color:#fff;font-weight:900">付款</span>
<div class="a ls" style="left:329.20px;top:304.9px;height:24px;line-height:24px;white-space:nowrap;color:#fff;font-weight:bold;transform-origin:0 0;transform:scaleX(1.05)"><span style="font-size:20.2px;letter-spacing:0.45px">-11</span><span style="font-size:10px;letter-spacing:0.6px;margin-left:0.3px">.9</span><span style="display:inline-block;width:2.2px"></span><span class="cj" style="font-size:7.95px;color:#fff;font-weight:bold">万元</span></div>
<span class="a cj" style="left:346.55px;top:345.05px;font-size:12.5px;line-height:12.5px;letter-spacing:2.4px;color:#fff;font-weight:900">毛利</span>
<div class="a ls" style="left:472.60px;top:304.9px;height:24px;line-height:24px;white-space:nowrap;color:#fff;font-weight:bold;transform-origin:0 0;transform:scaleX(1.05)"><span style="font-size:20.2px;letter-spacing:0.45px">9</span><span style="font-size:10px;letter-spacing:0.6px;margin-left:0.3px">.3</span><span style="display:inline-block;width:2.2px"></span><span class="cj" style="font-size:7.95px;color:#fff;font-weight:bold">亿元</span></div>
<span class="a cj" style="left:469.55px;top:345.35px;font-size:11.9px;line-height:11.9px;color:#fff;font-weight:900">银行余额</span>
<svg class="a" style="left:38px;top:261px" width="22" height="21" viewBox="38 261 22 21" fill="none" stroke="#d4591f" stroke-width="1"><path d="M40.64 269.42A8.2 8.2 0 0 1 56.78 270.83M56.56 273.38A8.2 8.2 0 0 1 40.42 271.97"/><path d="M39.6 270.3L40.6 266.3L43.4 268.9z M57.6 272.5L56.6 276.5L53.8 273.9z" fill="#d4591f" stroke="none"/></svg>
<span class="a ls" style="left:48.7px;top:267.9px;font-size:10px;line-height:10px;color:#d4591f;font-weight:bold;transform:translateX(-50%) scaleX(0.8)">S</span>
<svg class="a" style="left:172px;top:261px" width="22" height="21" viewBox="172 261 22 21" fill="none" stroke="#d88a1c" stroke-width="1.25" stroke-linejoin="round"><path d="M180 270V263.5H190.8V279.5H178"/><path d="M187.5 263.5V279.5" stroke-width="1.5"/><path d="M174.3 279.8V272.9L178.4 269.7L180 269.3"/><path d="M177.4 275.2L179.4 273.2L182.3 274.7L178.2 279.2" stroke-width="1.1"/><path d="M182.3 274.7L178.2 279.2" stroke-width="2"/></svg>
<svg class="a" style="left:305px;top:261px" width="22" height="21" viewBox="305 261 22 21" fill="none" stroke="#5b5fc4" stroke-width="0.9"><circle cx="316.2" cy="271.4" r="8.5"/><path d="M313 267.4L316.3 271.8L319.6 267.4M316.3 271.8V276.3M313.4 272H319.2M313.4 274H319.2" stroke-width="1.05"/></svg>
<svg class="a" style="left:439px;top:261px" width="20" height="19" viewBox="439 261 20 19" fill="none" stroke="#2f6aa8" stroke-width="1" stroke-linejoin="round"><path d="M441.3 267.6V276.4Q441.3 277.4 442.3 277.4H455.7V267.6z"/><path d="M441.3 267.6V265.6Q441.3 264.8 442.3 264.8H445.5M446 266.6L450.5 263.2L452.6 266.4M453 264.6L454.6 264.6L455.4 267.4"/><path d="M450.6 274.6H453.6"/></svg>
<span class="a cj" style="left:588.00px;top:236.40px;font-size:8px;line-height:8px;color:#111;font-weight:500">人效</span>
<svg class="a" style="left:590px;top:266px" width="26" height="22" viewBox="590 266 26 22" fill="#3468d4" stroke="none"><rect x="592.9" y="279.4" width="2.8" height="6"/><rect x="597.7" y="277.4" width="3.1" height="8"/><rect x="603.1" y="279.6" width="3.2" height="5.8"/><rect x="608.4" y="274.6" width="3.2" height="10.8"/><path d="M593.3 279.3L599.6 274.3L603.6 278.1L611 271.3" fill="none" stroke="#3468d4" stroke-width="2.15"/><path d="M608 269H613V273.8z"/></svg>
<div class="a ls" style="left:630.90px;top:252.30px;height:24px;line-height:24px;white-space:nowrap;color:#111;font-weight:bold;transform-origin:0 0;transform:scaleX(1.05)"><span style="font-size:20.2px;letter-spacing:0.45px">1747</span><span style="font-size:10.8px;letter-spacing:0.5px;margin-left:0.2px;color:#111">.6</span><span style="display:inline-block;width:2.2px"></span><span class="cj" style="font-size:7.6px;color:#111;font-weight:bold">万元</span></div>
<span class="a cj" style="left:630.70px;top:276.32px;font-size:7.95px;line-height:7.95px;color:#111;font-weight:500">本年总销售额</span>
<svg class="a" style="left:589.7px;top:323.4px" width="11.8" height="10" viewBox="0 0 13 11" fill="none" stroke="#4a48cf" stroke-width="1.1"><circle cx="4.8" cy="3.4" r="2.2"/><path d="M0.9 9.8V8.6Q0.9 6.4 3.4 6.4H6.2Q8.7 6.4 8.7 8.6V9.8z"/><path d="M8.2 1.3Q10.4 1.5 10.4 3.5Q10.4 5 8.9 5.6M9.4 6.5Q11.6 6.8 11.6 8.8V9.8H10.2"/></svg>
<div class="a ls" style="left:586.20px;top:337.50px;height:24px;line-height:24px;white-space:nowrap;color:#2f2fcf;font-weight:bold;transform-origin:0 0;transform:scaleX(1.05)"><span style="font-size:20.2px;letter-spacing:0.45px">165</span><span style="font-size:10.8px;letter-spacing:0.5px;margin-left:0.2px;color:#2f2fcf"></span><span style="display:inline-block;width:3.0px"></span><span class="cj" style="font-size:7.6px;color:#333;font-weight:normal">人</span></div>
<div class="a ls" style="left:660.20px;top:337.50px;height:24px;line-height:24px;white-space:nowrap;color:#111;font-weight:bold;transform-origin:0 0;transform:scaleX(1.05)"><span style="font-size:20.2px;letter-spacing:0.45px">10</span><span style="font-size:10.8px;letter-spacing:0.5px;margin-left:0.2px;color:#111">.6</span><span style="display:inline-block;width:2.2px"></span><span class="cj" style="font-size:7.6px;color:#111;font-weight:bold">万元</span></div>
<span class="a cj" style="left:585.90px;top:362.80px;font-size:8px;line-height:8px;color:#111;font-weight:500">目前总人数</span>
<span class="a cj" style="left:660.40px;top:362.88px;font-size:7.85px;line-height:7.85px;color:#111;font-weight:500">平均人效</span>
<span class="a cj" style="left:23.00px;top:410.25px;font-size:8.1px;line-height:8.1px;color:#666;font-weight:normal">月经营成果对比</span>
<span class="a cj" style="left:51.25px;top:440.55px;font-size:7.9px;line-height:7.9px;color:#1a1a1a;font-weight:bold">分类</span>
<span class="a cj" style="left:134.45px;top:440.55px;font-size:7.9px;line-height:7.9px;color:#1a1a1a;font-weight:bold">本月统计</span>
<span class="a cj" style="left:225.55px;top:440.55px;font-size:7.9px;line-height:7.9px;color:#1a1a1a;font-weight:bold">上月同期</span>
<span class="a cj" style="left:324.55px;top:440.55px;font-size:7.9px;line-height:7.9px;color:#1a1a1a;font-weight:bold">比较</span>
<span class="a cj" style="left:43.35px;top:460.45px;font-size:7.9px;line-height:7.9px;color:#222;font-weight:normal">新增客户</span>
<span class="a ls" style="left:192.60px;top:460.07px;font-size:8.3px;line-height:8.3px;color:#747474;font-weight:normal;transform:translateX(-100%);">1.00</span>
<span class="a ls" style="left:283.70px;top:460.07px;font-size:8.3px;line-height:8.3px;color:#747474;font-weight:normal;transform:translateX(-100%);">2.00</span>
<span class="a ls" style="left:374.80px;top:460.07px;font-size:8.3px;line-height:8.3px;color:#747474;font-weight:normal;transform:translateX(-100%);"><svg width="3.6" height="7" viewBox="0 0 3.6 7" style="display:inline-block;vertical-align:-0.9px;margin-right:0.5px"><path d="M1.8 0V6.2" fill="none" stroke="#27a644" stroke-width="0.9"/><path d="M0.2 4.6H3.4L1.8 6.9z" fill="#27a644"/></svg>1.00</span>
<span class="a cj" style="left:419.30px;top:440.55px;font-size:7.9px;line-height:7.9px;color:#1a1a1a;font-weight:bold">分类</span>
<span class="a cj" style="left:502.60px;top:440.55px;font-size:7.9px;line-height:7.9px;color:#1a1a1a;font-weight:bold">本月统计</span>
<span class="a cj" style="left:593.80px;top:440.55px;font-size:7.9px;line-height:7.9px;color:#1a1a1a;font-weight:bold">上月同期</span>
<span class="a cj" style="left:692.90px;top:440.55px;font-size:7.9px;line-height:7.9px;color:#1a1a1a;font-weight:bold">比较</span>
<span class="a cj" style="left:411.40px;top:460.45px;font-size:7.9px;line-height:7.9px;color:#222;font-weight:normal">收款金额</span>
<span class="a ls" style="left:560.80px;top:460.07px;font-size:8.3px;line-height:8.3px;color:#747474;font-weight:normal;transform:translateX(-100%);">0.00</span>
<span class="a ls" style="left:652.00px;top:460.07px;font-size:8.3px;line-height:8.3px;color:#747474;font-weight:normal;transform:translateX(-100%);">1,150.00</span>
<span class="a ls" style="left:743.20px;top:460.07px;font-size:8.3px;line-height:8.3px;color:#747474;font-weight:normal;transform:translateX(-100%);"><svg width="3.6" height="7" viewBox="0 0 3.6 7" style="display:inline-block;vertical-align:-0.9px;margin-right:0.5px"><path d="M1.8 0V6.2" fill="none" stroke="#27a644" stroke-width="0.9"/><path d="M0.2 4.6H3.4L1.8 6.9z" fill="#27a644"/></svg>1150.00</span>
</body></html>
